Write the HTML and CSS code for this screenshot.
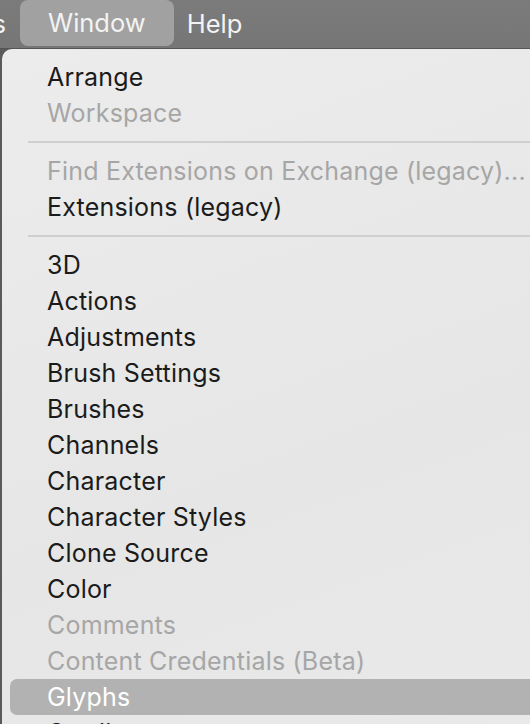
FILE: index.html
```html
<!DOCTYPE html>
<html>
<head>
<meta charset="utf-8">
<link rel="stylesheet" href="styles.css">
</head>
<body>
<div class="menubar">
  <div class="bar-item cut"><span>Plugins</span></div>
  <div class="bar-item active">Window</div>
  <div class="bar-item">Help</div>
</div>
<div class="menu">
  <div class="item">Arrange</div>
  <div class="item disabled">Workspace</div>
  <div class="sep"></div>
  <div class="item disabled">Find Extensions on Exchange (legacy)...</div>
  <div class="item">Extensions (legacy)</div>
  <div class="sep"></div>
  <div class="item">3D</div>
  <div class="item">Actions</div>
  <div class="item">Adjustments</div>
  <div class="item">Brush Settings</div>
  <div class="item">Brushes</div>
  <div class="item">Channels</div>
  <div class="item">Character</div>
  <div class="item">Character Styles</div>
  <div class="item">Clone Source</div>
  <div class="item">Color</div>
  <div class="item disabled">Comments</div>
  <div class="item disabled">Content Credentials (Beta)</div>
  <div class="item selected">Glyphs</div>
  <div class="item">Gradients</div>
</div>
</body>
</html>
```
FILE: styles.css
```css
html, body {
  margin: 0;
  padding: 0;
  width: 530px;
  height: 724px;
  overflow: hidden;
  background: #5a5a5a;
  font-family: Inter, "Liberation Sans", sans-serif;
}
.menubar {
  height: 48px;
  display: flex;
  align-items: stretch;
  background: linear-gradient(#7b7b7b, #767676);
  border-bottom: 1px solid #555555;
}
.bar-item {
  color: #f3f3f3;
  font-size: 25.5px;
  display: flex;
  align-items: center;
  padding: 0 13px 2px 13px;
  white-space: nowrap;
}
.bar-item.cut {
  width: 6px;
  padding: 0 14px 2px 0;
  justify-content: flex-end;
  overflow: hidden;
}
.bar-item.active {
  background: #a1a1a1;
  border-radius: 8px;
  padding: 0 28px 2px 28px;
  margin: 0 0 2px 0;
}
.menu {
  margin-left: 2px;
  height: 700px;
  background: linear-gradient(160deg, #ececec, #e6e6e6 60%, #e9e9e9);
  border-top-left-radius: 10px;
  padding-top: 10px;
  box-sizing: border-box;
}
.item {
  height: 36px;
  line-height: 36px;
  font-size: 25px;
  letter-spacing: 0.2px;
  color: #1b1b1b;
  padding-left: 37px;
  margin-left: 8px;
  white-space: nowrap;
}
.item.disabled {
  color: #a6a6a6;
}
.item.selected {
  background: #b2b2b2;
  color: #ffffff;
  border-radius: 7px 0 0 7px;
}
.sep {
  height: 2px;
  background: #cfcfcf;
  margin: 10px 0 10px 26px;
}
```
